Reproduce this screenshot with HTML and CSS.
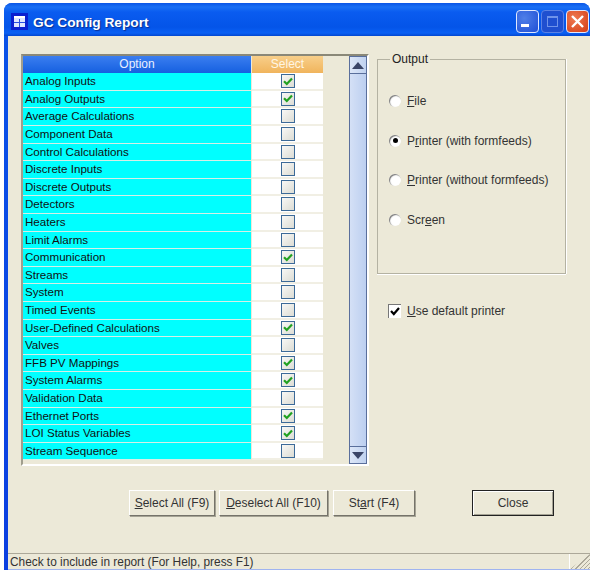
FILE: index.html
```html
<!DOCTYPE html>
<html lang="en">
<head>
<meta charset="utf-8">
<title>GC Config Report</title>
<link rel="stylesheet" href="styles.css">
</head>
<body>
<svg class="defs" width="0" height="0" aria-hidden="true">
  <symbol id="tick" viewBox="0 0 10 9">
    <path d="M1 4.2 L3.8 7 L9 1.5" fill="none" stroke="#21a121" stroke-width="2.2"/>
  </symbol>
</svg>
<div class="window">
  <header class="titlebar">
    <span class="app-icon">
      <svg width="17" height="17" viewBox="0 0 17 17">
        <rect width="17" height="17" fill="#0a1fd0"/>
        <rect x="3" y="3" width="11" height="11" fill="#dfe6ff"/>
        <path d="M3 9.5h11M8.5 6v8" stroke="#2a4fe0" stroke-width="1"/>
        <rect x="3" y="3" width="11" height="2" fill="#fff"/>
      </svg>
    </span>
    <h1 class="title">GC Config Report</h1>
    <div class="caption-buttons">
      <span class="cap cap-min"><svg width="21" height="21" viewBox="0 0 21 21"><rect x="4" y="13" width="8" height="3" fill="#fff"/></svg></span>
      <span class="cap cap-max"><svg width="21" height="21" viewBox="0 0 21 21"><rect x="5.5" y="5.5" width="10" height="10" fill="none" stroke="#6f93ea"/><rect x="5" y="5" width="11" height="2" fill="#6f93ea"/></svg></span>
      <span class="cap cap-close"><svg width="21" height="21" viewBox="0 0 21 21"><path d="M5 5 L16 16 M16 5 L5 16" stroke="#fff" stroke-width="2.4"/></svg></span>
    </div>
  </header>
  <main class="client">
    <div class="content">
      <section class="list-panel">
        <div class="table">
          <div class="row head"><div class="col-option">Option</div><div class="col-select">Select</div></div>
          <div class="row"><div class="opt">Analog Inputs</div><div class="sel"><span class="box"><svg><use href="#tick"/></svg></span></div></div>
          <div class="row"><div class="opt">Analog Outputs</div><div class="sel"><span class="box"><svg><use href="#tick"/></svg></span></div></div>
          <div class="row"><div class="opt">Average Calculations</div><div class="sel"><span class="box"></span></div></div>
          <div class="row"><div class="opt">Component Data</div><div class="sel"><span class="box"></span></div></div>
          <div class="row"><div class="opt">Control Calculations</div><div class="sel"><span class="box"></span></div></div>
          <div class="row"><div class="opt">Discrete Inputs</div><div class="sel"><span class="box"></span></div></div>
          <div class="row"><div class="opt">Discrete Outputs</div><div class="sel"><span class="box"></span></div></div>
          <div class="row"><div class="opt">Detectors</div><div class="sel"><span class="box"></span></div></div>
          <div class="row"><div class="opt">Heaters</div><div class="sel"><span class="box"></span></div></div>
          <div class="row"><div class="opt">Limit Alarms</div><div class="sel"><span class="box"></span></div></div>
          <div class="row"><div class="opt">Communication</div><div class="sel"><span class="box"><svg><use href="#tick"/></svg></span></div></div>
          <div class="row"><div class="opt">Streams</div><div class="sel"><span class="box"></span></div></div>
          <div class="row"><div class="opt">System</div><div class="sel"><span class="box"></span></div></div>
          <div class="row"><div class="opt">Timed Events</div><div class="sel"><span class="box"></span></div></div>
          <div class="row"><div class="opt">User-Defined Calculations</div><div class="sel"><span class="box"><svg><use href="#tick"/></svg></span></div></div>
          <div class="row"><div class="opt">Valves</div><div class="sel"><span class="box"></span></div></div>
          <div class="row"><div class="opt">FFB PV Mappings</div><div class="sel"><span class="box"><svg><use href="#tick"/></svg></span></div></div>
          <div class="row"><div class="opt">System Alarms</div><div class="sel"><span class="box"><svg><use href="#tick"/></svg></span></div></div>
          <div class="row"><div class="opt">Validation Data</div><div class="sel"><span class="box"></span></div></div>
          <div class="row"><div class="opt">Ethernet Ports</div><div class="sel"><span class="box"><svg><use href="#tick"/></svg></span></div></div>
          <div class="row"><div class="opt">LOI Status Variables</div><div class="sel"><span class="box"><svg><use href="#tick"/></svg></span></div></div>
          <div class="row"><div class="opt">Stream Sequence</div><div class="sel"><span class="box"></span></div></div>
        </div>
        <div class="scrollbar">
          <span class="scroll-btn"><svg width="12" height="7" viewBox="0 0 12 7"><path d="M6 0 L12 7 H0 Z" fill="#3b4668"/></svg></span>
          <span class="scroll-thumb"></span>
          <span class="scroll-btn"><svg width="12" height="7" viewBox="0 0 12 7"><path d="M0 0 H12 L6 7 Z" fill="#3b4668"/></svg></span>
        </div>
      </section>
      <aside class="side">
        <fieldset class="group">
          <legend>Output</legend>
          <label class="radio-row"><span class="radio"></span><span><u>F</u>ile</span></label>
          <label class="radio-row"><span class="radio on"></span><span>P<u>r</u>inter (with formfeeds)</span></label>
          <label class="radio-row"><span class="radio"></span><span><u>P</u>rinter (without formfeeds)</span></label>
          <label class="radio-row"><span class="radio"></span><span>Scr<u>e</u>en</span></label>
        </fieldset>
        <label class="default-printer">
          <span class="flat-box"><svg width="10" height="9" viewBox="0 0 10 9"><path d="M1 4 L3.8 7 L9 1" fill="none" stroke="#000" stroke-width="2.2"/></svg></span>
          <span><u>U</u>se default printer</span>
        </label>
      </aside>
    </div>
    <div class="actions">
      <button class="btn btn-select"><u>S</u>elect All (F9)</button>
      <button class="btn btn-deselect"><u>D</u>eselect All (F10)</button>
      <button class="btn btn-start">St<u>a</u>rt (F4)</button>
      <button class="btn btn-close">Close</button>
    </div>
    <footer class="status">
      <span class="status-text">Check to include in report (For Help, press F1)</span>
      <span class="status-grip"></span>
    </footer>
  </main>
</div>
</body>
</html>
```
FILE: styles.css
```css
* { box-sizing: border-box; }

html, body {
  margin: 0;
  background: #fff;
}

body {
  width: 590px;
  height: 571px;
  overflow: hidden;
  padding: 3px 0 0 4px;
  font-family: "Liberation Sans", Arial, sans-serif;
  font-size: 12px;
  color: #1a1a1a;
}

.defs { position: absolute; }

.window {
  width: 586px;
  height: 567px;
  padding: 0 0 0 4px;
  border-radius: 8px 8px 0 0;
  background: linear-gradient(#0a52e8, #0a52e8 30px, #0b3fe0);
  display: flex;
  flex-direction: column;
}

/* Title bar */
.titlebar {
  height: 33px;
  flex: none;
  display: flex;
  align-items: center;
  padding: 4px 1px 0 0;
  margin-left: -4px;
  border-radius: 8px 8px 0 0;
  background: linear-gradient(#0a55e6 0, #1a70f4 4px, #0a5cf0 9px, #0454e8 24px, #0a60f4 30px, #0347d0);
}

.app-icon { display: flex; margin-left: 7px; }

.title {
  margin: 1px 0 0 5px;
  font-size: 13.7px;
  font-weight: bold;
  color: #fff;
  text-shadow: 1px 1px 1px #0b2f90;
}

.caption-buttons {
  margin-left: auto;
  display: flex;
  gap: 2px;
}

.cap {
  width: 23px;
  height: 23px;
  border: 1px solid #dfe8ff;
  border-radius: 4px;
  display: flex;
  align-items: center;
  justify-content: center;
}

.cap-min { background: radial-gradient(circle at 35% 35%, #4f7fe8, #1f4fd6); }
.cap-max { background: #1f4fd0; border-color: #5b82e4; }
.cap-close { background: radial-gradient(circle at 35% 35%, #ee7a52, #d43c14); }

/* Client area */
.client {
  flex: 1;
  min-height: 0;
  background: #ece9d8;
  display: flex;
  flex-direction: column;
}

.content {
  display: flex;
  align-items: flex-start;
  padding: 18px 0 0 13px;
  gap: 8px;
}

/* Option list */
.list-panel {
  width: 348px;
  height: 412px;
  flex: none;
  display: flex;
  justify-content: space-between;
  border: 2px solid;
  border-color: #8a8878 #fff #fff #a09e8e;
}

.table { width: 300px; }

.row {
  display: grid;
  grid-template-columns: 228px 71px;
  column-gap: 1px;
  height: 18px;
}

/* Two rows in every five are 17px, for a 17.6px pitch on whole pixels */
.row:nth-child(5n+3),
.row:nth-child(5n+6) { height: 17px; }

.head,
.head:nth-child(n) {
  height: 17px;
  color: #e8f0ff;
  text-align: center;
  line-height: 17px;
}

.col-option { background: linear-gradient(#3b7ef0, #1560e0); }
.col-select { background: linear-gradient(#f8cf8a, #f0b45c); color: #fff6e4; }

.opt {
  background: #00ffff;
  border-bottom: 1px solid #d6efe6;
  padding-left: 2px;
  font-size: 11.6px;
  line-height: 16px;
  color: #111;
  white-space: nowrap;
}

.sel {
  background: #fff;
  border-bottom: 2px solid #f1efe4;
  display: flex;
  justify-content: center;
  align-items: center;
}

.box {
  width: 14px;
  height: 14px;
  border: 1px solid #3c6a98;
  background: linear-gradient(135deg, #f8f8f6, #dcdcd4);
  display: flex;
  align-items: center;
  justify-content: center;
}

.box svg { width: 10px; height: 9px; }

.scrollbar {
  width: 18px;
  display: flex;
  flex-direction: column;
  background: linear-gradient(90deg, #d4e0f6, #bccff0);
  border: 1px solid #5a6f9c;
  border-width: 0 1px;
}

.scroll-btn {
  height: 18px;
  flex: none;
  display: flex;
  align-items: center;
  justify-content: center;
  background: linear-gradient(90deg, #dde7f8, #c0d2f0);
  border-top: 1px solid #5a6f9c;
  border-bottom: 1px solid #5a6f9c;
}

.scroll-thumb { flex: 1; }

/* Output options */
.side {
  width: 189px;
  flex: none;
  margin-top: -1px;
}

.group {
  height: 221px;
  margin: 0;
  padding: 16px 0 0 11px;
  border: 1px solid #b4b2a2;
  box-shadow: 0 1px 0 #fff, 1px 0 0 #fff;
  display: flex;
  flex-direction: column;
}

.group legend {
  margin-left: 1px;
  padding: 0 2px;
  line-height: 12px;
  color: #222;
}

.radio-row {
  height: 39.7px;
  display: flex;
  align-items: center;
  gap: 6px;
  color: #333;
}

.radio {
  width: 12px;
  height: 12px;
  border-radius: 50%;
  background: #fff;
  box-shadow: inset 1px 1px 1px #777;
  position: relative;
}

.radio.on::after {
  content: "";
  position: absolute;
  left: 3.5px;
  top: 3.5px;
  width: 5px;
  height: 5px;
  border-radius: 50%;
  background: #000;
}

.default-printer {
  display: flex;
  align-items: center;
  gap: 6px;
  margin: 30px 0 0 11px;
  color: #333;
}

.flat-box {
  width: 13px;
  height: 14px;
  display: flex;
  align-items: center;
  justify-content: center;
  background: #fff;
  box-shadow: inset 1px 1px 0 #777;
}

/* Command buttons */
.actions {
  display: flex;
  padding: 24px 0 0 121px;
}

.btn {
  height: 26px;
  padding: 0;
  font: inherit;
  color: #333;
  background: #ece9d8;
  border: 1px solid;
  border-color: #fff #75736a #75736a #fff;
  box-shadow: 1px 1px 0 #a5a394;
}

.btn-select { width: 86px; margin-right: 4px; }
.btn-deselect { width: 109px; margin-right: 5px; }
.btn-start { width: 82px; margin-right: 57px; }
.btn-close {
  width: 82px;
  border: 1px solid #222;
  box-shadow: inset 1px 1px 0 #fff, inset -1px -1px 0 #a5a394;
}

/* Status bar */
.status {
  margin-top: auto;
  height: 17px;
  display: flex;
  align-items: center;
  border-top: 1px solid #aca899;
  padding-left: 2px;
  border-bottom: 1px solid #9fb4f0;
}

.status-text {
  flex: 1;
  height: 100%;
  font-size: 11.85px;
  line-height: 17px;
  color: #333;
  border-right: 1px solid #fff;
}

.status-grip {
  width: 20px;
  height: 100%;
  background: repeating-linear-gradient(135deg, #ece9d8 0 2px, #aca899 2px 3px);
  clip-path: polygon(100% 0, 100% 100%, 0 100%);
}
```
